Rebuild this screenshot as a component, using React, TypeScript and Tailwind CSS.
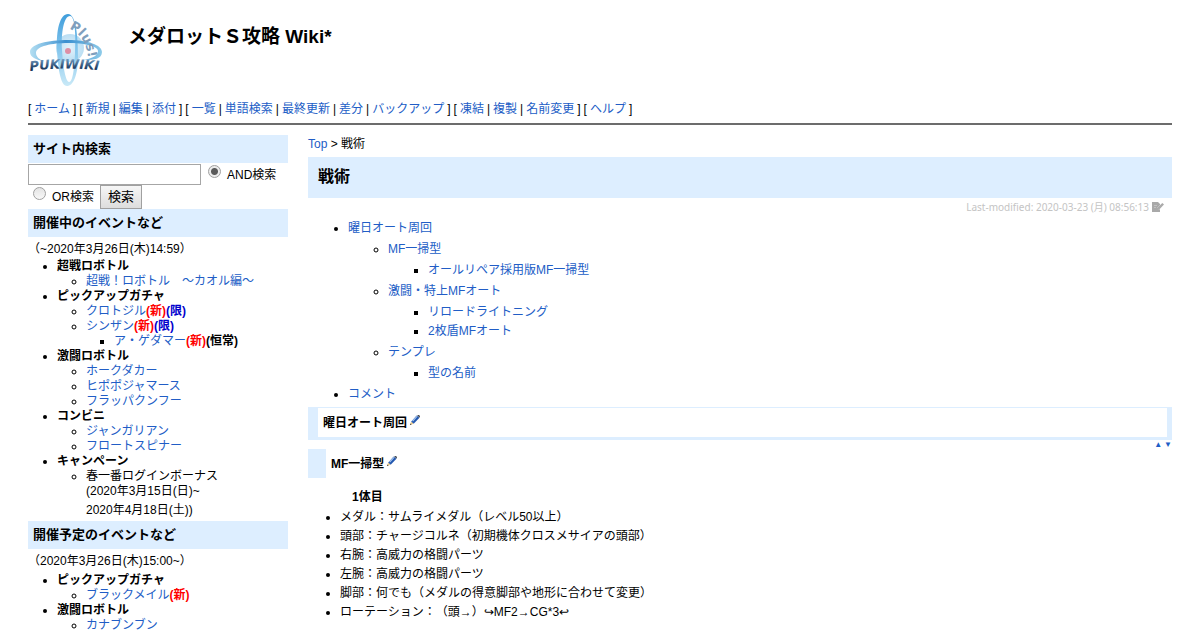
import React from "react";

const FONT = "font-['Liberation_Sans','Noto_Sans_CJK_JP',sans-serif] [text-spacing-trim:space-all]";

function A({ children }: { children: React.ReactNode }) {
  return (
    <a href="#" className="text-[#215dc6] no-underline hover:underline">
      {children}
    </a>
  );
}

function Logo() {
  return (
    <svg viewBox="0 0 80 80" className="size-20 shrink-0" role="img" aria-label="PukiWiki Plus!">
      <defs>
        <linearGradient id="ringV" x1="0" y1="0" x2="0" y2="1">
          <stop offset="0" stopColor="#3f9ddb" />
          <stop offset="0.45" stopColor="#7fc3ec" />
          <stop offset="1" stopColor="#c9e9f7" />
        </linearGradient>
        <linearGradient id="ringH" x1="0" y1="0" x2="1" y2="0">
          <stop offset="0" stopColor="#b4dff2" />
          <stop offset="0.5" stopColor="#3a8fd0" />
          <stop offset="1" stopColor="#8ecbe9" />
        </linearGradient>
        <radialGradient id="core">
          <stop offset="0" stopColor="#d9eefb" />
          <stop offset="1" stopColor="#a3d3ef" />
        </radialGradient>
        <linearGradient id="word" gradientUnits="userSpaceOnUse" x1="0" y1="47" x2="0" y2="61">
          <stop offset="0" stopColor="#7faed4" />
          <stop offset="1" stopColor="#0b2448" />
        </linearGradient>
        <path id="wordArc" d="M2 61 Q38 56 78 61" />
        <path id="plusArc" d="M41 19 Q59 25 61 54" />
      </defs>
      <circle cx="42" cy="38" r="14" fill="url(#core)" opacity="0.75" />
      <path
        fillRule="evenodd"
        fill="url(#ringV)"
        d="M40 4C32 4 28 20 29 40S33 76 39 76S50 66 50 46S48 4 40 4ZM42 6C47 6 48 24 47 44S44 72 41 72S35 58 34 40S36 6 42 6Z"
      />
      <path
        fillRule="evenodd"
        fill="url(#ringH)"
        d="M2 42C2 34 20 30 40 30S74 35 74 42S66 50 56 50C66 48 70 45 70 41C70 36 56 33 40 33S8 36 8 43C8 47 12 50 16 51C8 50 2 47 2 42Z"
      />
      <circle cx="40" cy="41" r="3" fill="#dd8fa5" />
      <text fill="url(#word)" className="font-['DejaVu_Sans',sans-serif] text-[13px] font-bold italic">
        <textPath href="#wordArc">PUKIWIKI</textPath>
      </text>
      <text fill="#7f9fbd" className="font-['DejaVu_Sans',sans-serif] text-[13px] font-bold">
        <textPath href="#plusArc">Plus!</textPath>
      </text>
    </svg>
  );
}

function Pencil() {
  return (
    <svg viewBox="0 0 9 9" className="mb-2 ml-[3px] inline-block size-[10px]" aria-hidden="true">
      <path d="M6 0.5 8.5 2.5 3.3 7.8 1 6Z" fill="#2358b0" />
      <path d="M6.3 1.2 2.4 5.6" stroke="#a9c8f0" strokeWidth="1" />
      <path d="M6.4 0.3 8 0 9 1 8.6 2.5Z" fill="#39424f" />
      <path d="M1 6 3.2 7.8 0 9Z" fill="#e8c98a" />
      <path d="M0.5 7.6 0 9 1.4 8.5Z" fill="#222" />
    </svg>
  );
}

function NoteIcon() {
  return (
    <svg viewBox="0 0 12 10" className="ml-[3px] h-[10px] w-3" aria-hidden="true">
      <path d="M0 0h6l2 2v1L5 6v2l2-.3L8 7v3H0Z" fill="#a9a9a9" />
      <path d="M2 3.5h3M2 5.5h2" stroke="#d4d4d4" strokeWidth="0.6" />
      <path d="M4.5 6.5 10.3 1 12 2.5 7 7.8 4.4 8.6Z" fill="#ababab" />
    </svg>
  );
}

const NAV: string[][] = [
  ["ホーム"],
  ["新規", "編集", "添付"],
  ["一覧", "単語検索", "最終更新", "差分", "バックアップ"],
  ["凍結", "複製", "名前変更"],
  ["ヘルプ"],
];

const New = () => <b className="text-[#ff0000]">(新)</b>;
const Limited = () => <b className="text-[#0000cc]">(限)</b>;

function SideHeading({ children }: { children: React.ReactNode }) {
  return <h2 className="bg-[#ddeeff] px-[5px] text-[13px] leading-7 font-bold">{children}</h2>;
}

function Group({ title, children }: { title: string; children: React.ReactNode }) {
  return (
    <li>
      <b>{title}</b>
      <ul className="list-[circle] pl-[29px]">{children}</ul>
    </li>
  );
}

const RADIO =
  "size-[13px] appearance-none rounded-full border border-[#a0a0a0] bg-linear-to-b from-[#e4e4e4] to-[#f8f8f8] checked:bg-[radial-gradient(circle,#5a5a5a_3px,#ececec_4px)]";

function Sidebar() {
  return (
    <aside className="w-65 shrink-0">
      <SideHeading>サイト内検索</SideHeading>
      <form className="flex flex-wrap items-center pt-px" onSubmit={(e) => e.preventDefault()}>
        <input
          type="text"
          aria-label="検索語"
          className="h-[21px] w-[173px] border border-[#a6a6a6] bg-white px-1 text-[13px]"
        />
        <label className="ml-[7px] flex h-[21px] items-start">
          <input type="radio" name="type" defaultChecked className={RADIO + " mt-px mr-[6px]"} />
          <span className="pt-0.5">AND検索</span>
        </label>
        <label className="ml-[5px] flex h-6 items-start">
          <input type="radio" name="type" className={RADIO + " mt-0.5 mr-[6px]"} />
          <span className="pt-[3px]">OR検索</span>
        </label>
        <button
          type="submit"
          className="ml-[6px] h-6 border border-[#a0a0a0] bg-linear-to-b from-[#f6f6f6] to-[#dddddd] px-[7px] text-[13px] leading-5"
        >
          検索
        </button>
      </form>
      <SideHeading>開催中のイベントなど</SideHeading>
      <p className="pt-0.5 leading-5">（~2020年3月26日(木)14:59）</p>
      <ul className="list-disc pl-[29px] leading-[15px]">
        <Group title="超戦ロボトル">
          <li><A>超戦！ロボトル　～カオル編～</A></li>
        </Group>
        <Group title="ピックアップガチャ">
          <li><A>クロトジル</A><New /><Limited /></li>
          <li>
            <A>シンザン</A><New /><Limited />
            <ul className="list-[square] pl-7">
              <li><A>ア・ゲダマー</A><New /><b>(恒常)</b></li>
            </ul>
          </li>
        </Group>
        <Group title="激闘ロボトル">
          <li><A>ホークダカー</A></li>
          <li><A>ヒポポジャマース</A></li>
          <li><A>フラッパクンフー</A></li>
        </Group>
        <Group title="コンビニ">
          <li><A>ジャンガリアン</A></li>
          <li><A>フロートスピナー</A></li>
        </Group>
        <Group title="キャンペーン">
          <li>
            春一番ログインボーナス
            <br />
            (2020年3月15日(日)~
            <p className="pt-0.5 pb-px leading-[19px]">2020年4月18日(土))</p>
          </li>
        </Group>
      </ul>
      <SideHeading>開催予定のイベントなど</SideHeading>
      <p className="py-0.5 leading-5">（2020年3月26日(木)15:00~）</p>
      <ul className="list-disc pl-[29px] leading-[15px]">
        <Group title="ピックアップガチャ">
          <li><A>ブラックメイル</A><New /></li>
        </Group>
        <Group title="激闘ロボトル">
          <li><A>カナブンブン</A></li>
        </Group>
      </ul>
    </aside>
  );
}

const PARTS = [
  "メダル：サムライメダル（レベル50以上）",
  "頭部：チャージコルネ（初期機体クロスメサイアの頭部）",
  "右腕：高威力の格闘パーツ",
  "左腕：高威力の格闘パーツ",
  "脚部：何でも（メダルの得意脚部や地形に合わせて変更）",
  "ローテーション：（頭→）↪MF2→CG*3↩",
];

function Contents() {
  return (
    <ul className="my-[3px] list-disc pl-10 leading-[19px]">
      <li>
        <A>曜日オート周回</A>
        <ul className="my-0.5 list-[circle] pl-10">
          <li>
            <A>MF一掃型</A>
            <ul className="my-0.5 list-[square] pl-10">
              <li><A>オールリペア採用版MF一掃型</A></li>
            </ul>
          </li>
          <li>
            <A>激闘・特上MFオート</A>
            <ul className="my-0.5 list-[square] pl-10">
              <li><A>リロードライトニング</A></li>
              <li><A>2枚盾MFオート</A></li>
            </ul>
          </li>
          <li>
            <A>テンプレ</A>
            <ul className="my-0.5 list-[square] pl-10">
              <li><A>型の名前</A></li>
            </ul>
          </li>
        </ul>
      </li>
      <li><A>コメント</A></li>
    </ul>
  );
}

export default function App() {
  return (
    <div lang="ja" className={FONT + " bg-white px-7 pt-[10px] text-[12px] leading-[19px] text-black"}>
      <header className="flex items-start gap-5">
        <Logo />
        <h1 className="pt-[13px] text-[19px] leading-7 font-bold">メダロットＳ攻略 Wiki*</h1>
      </header>
      <nav className="flex flex-wrap gap-x-[3px] pt-[10px]">
        {NAV.map((group) => (
          <div key={group[0]} className="flex gap-x-[3px]">
            <span>[</span>
            {group.map((item, j) => (
              <React.Fragment key={item}>
                {j > 0 && <span>|</span>}
                <A>{item}</A>
              </React.Fragment>
            ))}
            <span>]</span>
          </div>
        ))}
      </nav>
      <hr className="mt-1 border-t-2 border-[#6c6c6c]" />
      <div className="flex items-start gap-5 pt-[10px]">
        <Sidebar />
        <main className="min-w-0 flex-1">
          <div className="pb-[3px] leading-[19px]">
            <A>Top</A> &gt; 戦術
          </div>
          <h2 className="bg-[#ddeeff] px-[10px] pb-0.5 text-[16px] leading-[39px] font-bold">戦術</h2>
          <div className="flex items-center justify-end pr-2 font-['Noto_Sans','Noto_Sans_CJK_JP',sans-serif] text-[10px] leading-[18px] text-[#c4c4c4]">
            Last-modified: 2020-03-23 (月) 08:56:13
            <NoteIcon />
          </div>
          <Contents />
          <h3 className="border-t border-r-[5px] border-b-[3px] border-l-[10px] border-[#ddeeff] pt-0.5 pl-[5px] leading-[27px] font-bold">
            曜日オート周回
            <Pencil />
          </h3>
          <div className="flex justify-end gap-[2px] text-[8px] leading-[9px]">
            <A>▲</A>
            <A>▼</A>
          </div>
          <h4 className="border-l-18 border-[#ddeeff] pt-0.5 pl-[5px] leading-[27px] font-bold">
            MF一掃型
            <Pencil />
          </h4>
          <h5 className="pt-[10px] pl-11 font-bold">1体目</h5>
          <ul className="mt-px list-disc pl-8 leading-[19px]">
            {PARTS.map((part) => (
              <li key={part}>{part}</li>
            ))}
          </ul>
        </main>
      </div>
    </div>
  );
}
